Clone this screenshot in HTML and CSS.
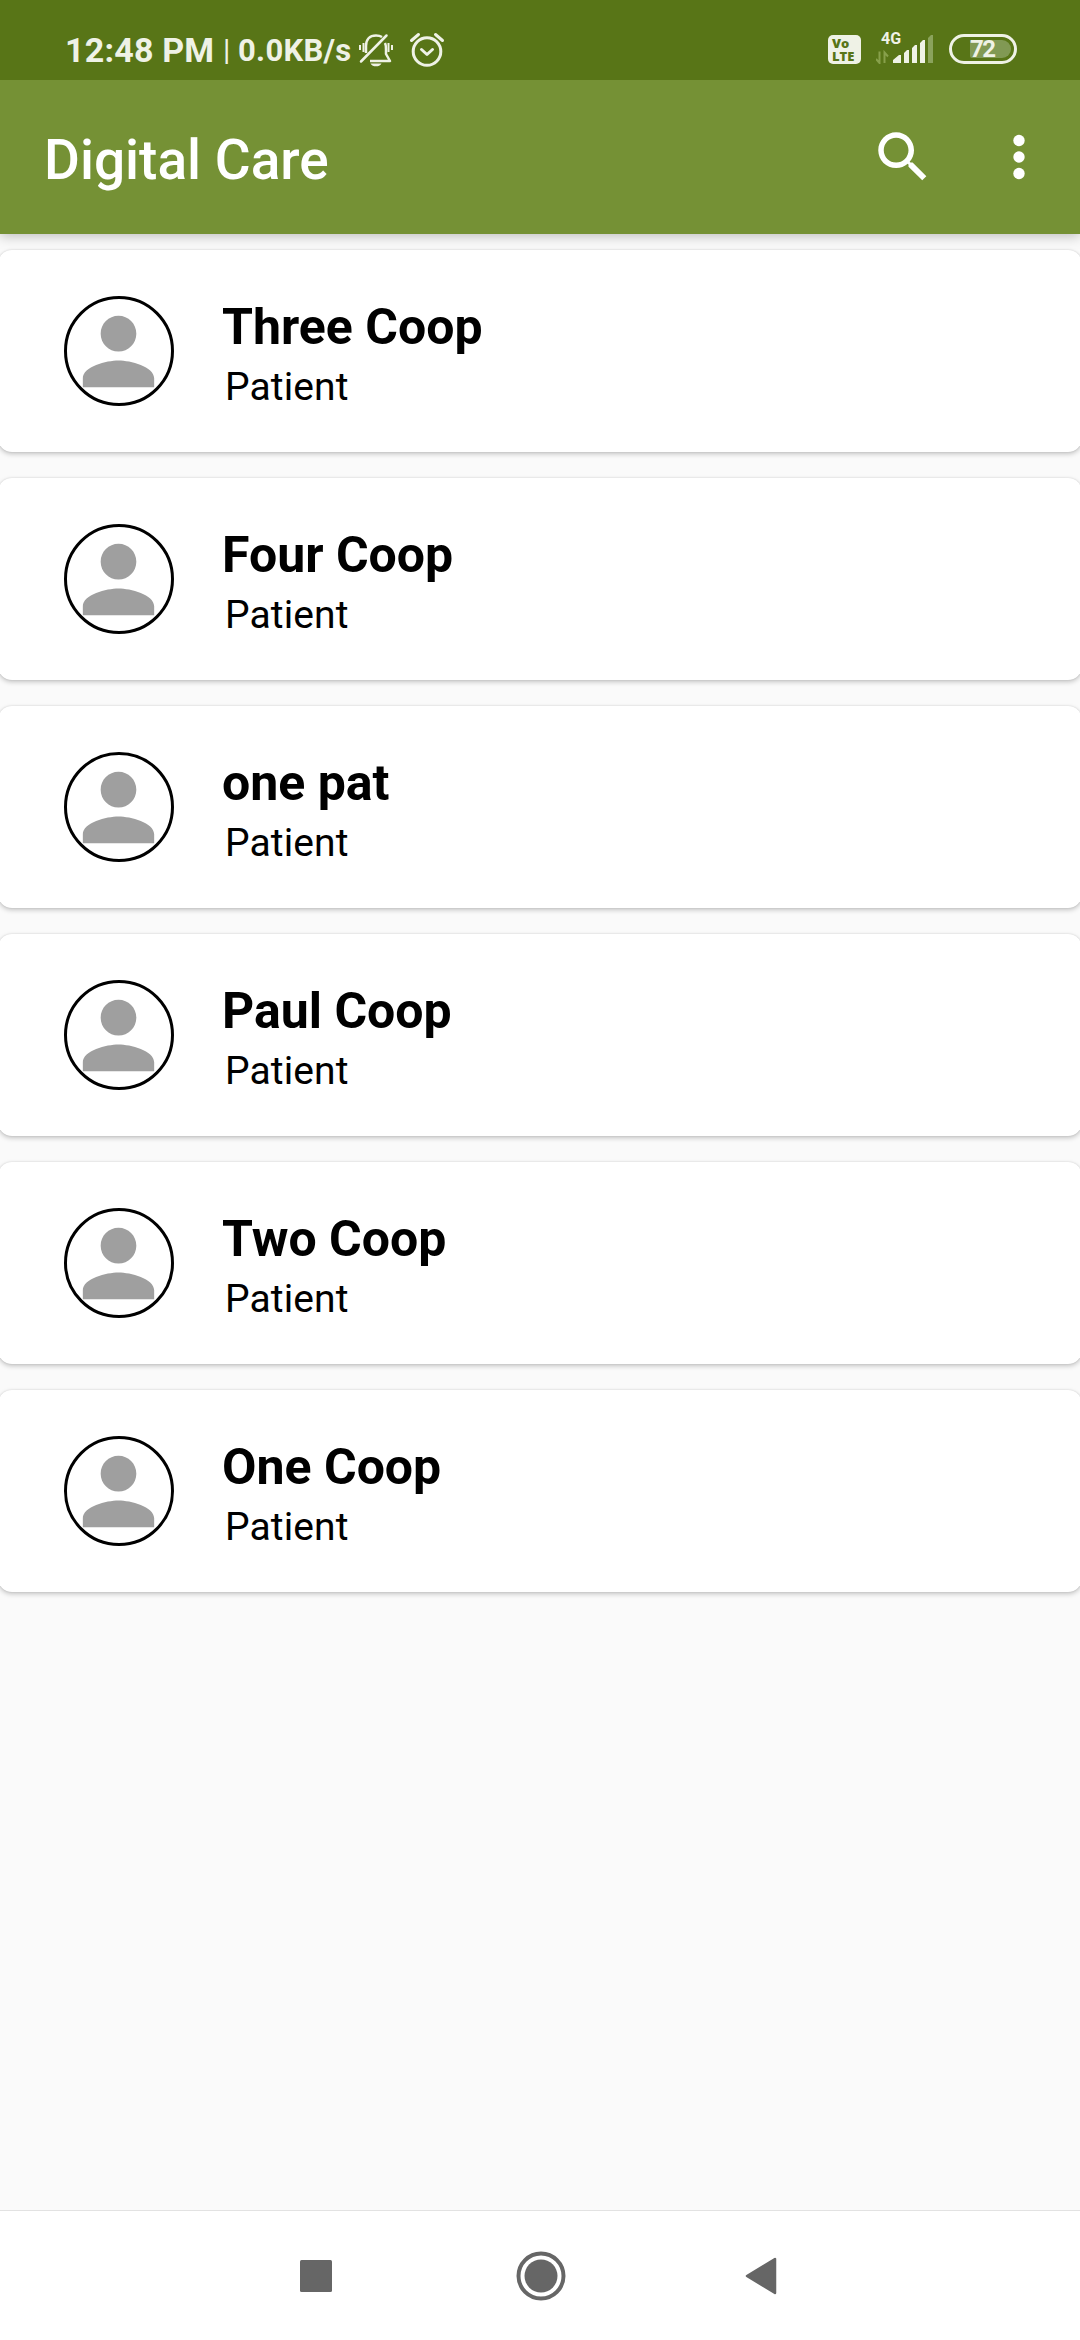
FILE: index.html
```html
<!DOCTYPE html>
<html lang="en">
<head>
<meta charset="utf-8">
<title>Digital Care</title>
<link rel="stylesheet" href="styles.css">
</head>
<body>
<svg class="defs" aria-hidden="true">
  <symbol id="person" viewBox="0 0 24 24"><path d="M12 12c2.21 0 4-1.79 4-4s-1.79-4-4-4-4 1.79-4 4 1.79 4 4 4zm0 2c-2.67 0-8 1.34-8 4v2h16v-2c0-2.66-5.33-4-8-4z"/></symbol>
</svg>
<div class="screen">
  <div class="status">
    <span class="time">12:48 PM</span>
    <span class="divider">|</span>
    <span class="speed">0.0KB/s</span>
    <svg class="bell" width="36" height="36" viewBox="0 0 36 36" fill="none" stroke="#eff2e6" stroke-width="2.5">
      <path d="M8 22V15C8 8.500 11.500 4.500 18 4.500c2.500 0 4.500.5 6 1.500M27 12c1 2 1 4 1 6v5l4 7H12" stroke-linejoin="round"/>
      <path d="M3 30.500L28.500 4.500" stroke-linecap="round"/>
      <path d="M2 14v5M5.500 12v9M30.500 12v9M34 14v5" stroke-width="2"/>
      <path d="M12.500 32.500h11c-2 3.800-9 3.800-11 0z" fill="#eff2e6" stroke="none"/>
    </svg>
    <svg class="alarm" width="36" height="36" viewBox="0 0 36 36" fill="none" stroke="#eff2e6" stroke-width="3" stroke-linecap="round" stroke-linejoin="round">
      <circle cx="18" cy="20.500" r="13.800"/>
      <path d="M12.500 18.500l5.500 5 5.500-5M2.500 9.500l7-6M33.500 9.500l-7-6"/>
    </svg>
    <div class="volte"><span>Vo</span><span>LTE</span></div>
    <div class="network">
      <span class="gen">4G</span>
      <svg width="58" height="30" viewBox="0 0 58 30">
        <path d="M3.500 17.500V29L0 25M8.500 29V18.500l3.500 4" fill="none" stroke="#87a04b" stroke-width="2"/>
        <g fill="#eff2e6">
          <path d="M17 29v-3l6-5h2v8zM28 29V19l3-3h2v13zM36 29V14l3-3h2v18zM44 29V9l3-3h2v23z"/>
          <path d="M52 29V4l3-3h2v28z" fill="#8ba35c"/>
        </g>
      </svg>
    </div>
    <div class="battery"><span class="level">72</span></div>
  </div>
  <header class="appbar">
    <h1>Digital Care</h1>
    <svg class="search" width="66" height="66" viewBox="0 0 24 24" fill="#fff"><path d="M15.500 14h-.79l-.28-.27C15.410 12.590 16 11.110 16 9.500 16 5.910 13.090 3 9.500 3S3 5.910 3 9.500 5.910 16 9.500 16c1.610 0 3.090-.59 4.230-1.570l.27.28v.79l5 4.990L20.490 19l-4.990-5zm-6 0C7.010 14 5 11.990 5 9.500S7.010 5 9.500 5 14 7.010 14 9.500 11.990 14 9.500 14z"/></svg>
    <svg class="more" width="66" height="66" viewBox="0 0 24 24" fill="#fff"><circle cx="12" cy="6" r="2.070"/><circle cx="12" cy="12" r="2.070"/><circle cx="12" cy="18" r="2.070"/></svg>
  </header>
  <main class="list">
    <article class="card"><div class="avatar"><svg><use href="#person"/></svg></div><div class="info"><h2>Three Coop</h2><p>Patient</p></div></article>
    <article class="card"><div class="avatar"><svg><use href="#person"/></svg></div><div class="info"><h2>Four Coop</h2><p>Patient</p></div></article>
    <article class="card"><div class="avatar"><svg><use href="#person"/></svg></div><div class="info"><h2>one pat</h2><p>Patient</p></div></article>
    <article class="card"><div class="avatar"><svg><use href="#person"/></svg></div><div class="info"><h2>Paul Coop</h2><p>Patient</p></div></article>
    <article class="card"><div class="avatar"><svg><use href="#person"/></svg></div><div class="info"><h2>Two Coop</h2><p>Patient</p></div></article>
    <article class="card"><div class="avatar"><svg><use href="#person"/></svg></div><div class="info"><h2>One Coop</h2><p>Patient</p></div></article>
  </main>
  <nav class="navbar">
    <svg width="32" height="32" viewBox="0 0 32 32"><rect width="32" height="32" rx="1.500"/></svg>
    <svg class="home" width="50" height="50" viewBox="0 0 50 50"><circle cx="25" cy="25" r="16.500"/><circle cx="25" cy="25" r="22.500" fill="none" stroke="#666" stroke-width="4"/></svg>
    <svg class="back" width="32" height="38" viewBox="0 0 32 38"><path d="M2 19L30 2v34z" stroke="#666" stroke-width="2.500" stroke-linejoin="round"/></svg>
  </nav>
</div>
</body>
</html>
```
FILE: styles.css
```css
* { box-sizing: border-box; }
body, h1, h2, p { margin: 0; }
body { font-family: Roboto, sans-serif; }
svg { display: block; flex: none; }
.defs { display: none; }

.screen {
  display: flex;
  flex-direction: column;
  width: 1080px;
  height: 2340px;
  overflow: hidden;
  background: #fafafa;
}

.status {
  position: relative;
  z-index: 2;
  display: flex;
  height: 80px;
  padding-left: 65px;
  background: #587517;
  color: #eff2e6;
  font-weight: 700;
  white-space: nowrap;
}
.time { width: 158px; padding-top: 30px; font-size: 34px; line-height: 40px; letter-spacing: .2px; }
.divider { width: 15px; padding-top: 31px; font-size: 30px; line-height: 38px; font-weight: 400; }
.speed { width: 120px; padding-top: 32px; font-size: 31px; line-height: 38px; letter-spacing: .3px; }
.bell { margin-top: 31px; }
.alarm { margin: 31px 0 0 15px; }
.volte {
  display: flex;
  flex-direction: column;
  width: 33px;
  height: 29px;
  margin: 35px 0 0 383px;
  padding: 2px 0 0 4px;
  border-radius: 5px;
  background: #eff2e6;
  color: #587517;
  font: 800 13px/12.500px "Open Sans", sans-serif;
}
.network { width: 58px; margin: 31px 0 0 15px; }
.gen { display: block; height: 3px; padding-left: 5px; font-size: 16px; line-height: 16px; }
.battery {
  width: 68px;
  height: 30px;
  margin: 34px 0 0 15px;
  padding: 3px 3px 3px 18px;
  border: 3px solid #eff2e6;
  border-radius: 15px;
}
.level {
  display: block;
  height: 18px;
  border-radius: 2px 9px 9px 2px;
  background: #819954;
  font-size: 24px;
  line-height: 19px;
  letter-spacing: -1.500px;
}

.appbar {
  position: relative;
  display: flex;
  flex: none;
  height: 154px;
  padding-left: 44px;
  background: #759135;
  box-shadow: 0 2px 12px rgba(0, 0, 0, .25);
  color: #fff;
}
.appbar h1 { width: 826px; padding-top: 48px; font-size: 55px; line-height: 64px; font-weight: 500; }
.search { margin-top: 44px; }
.more { margin: 44px 0 0 50px; }

.list { display: flex; flex: 1; flex-direction: column; gap: 26px; padding-top: 16px; }
.card {
  display: flex;
  height: 202px;
  margin: 0 -2px;
  padding: 46px 0 0 65px;
  border-radius: 14px;
  background: #fff;
  box-shadow: 0 2px 5px rgba(0, 0, 0, .22), 0 0 2px rgba(0, 0, 0, .12);
}
.avatar { width: 110px; height: 110px; margin-left: .5px; border: 3px solid #000; border-radius: 50%; }
.avatar svg { width: 107px; height: 107px; margin: -1.500px; }
.avatar svg { fill: #9f9f9f; }
.info { padding-left: 48.500px; color: #000; }
.info h2 { padding-top: 2px; font-size: 50px; line-height: 58px; font-weight: 700; }
.info p { padding: 8px 0 0 3px; font-size: 39px; line-height: 46px; letter-spacing: .1px; }

.navbar {
  display: flex;
  flex: none;
  align-items: center;
  height: 130px;
  padding-left: 300px;
  border-top: 1px solid #e2e2e2;
  background: #fff;
  fill: #666;
}
.home { margin-left: 184px; }
.back { margin-left: 179px; }
```
